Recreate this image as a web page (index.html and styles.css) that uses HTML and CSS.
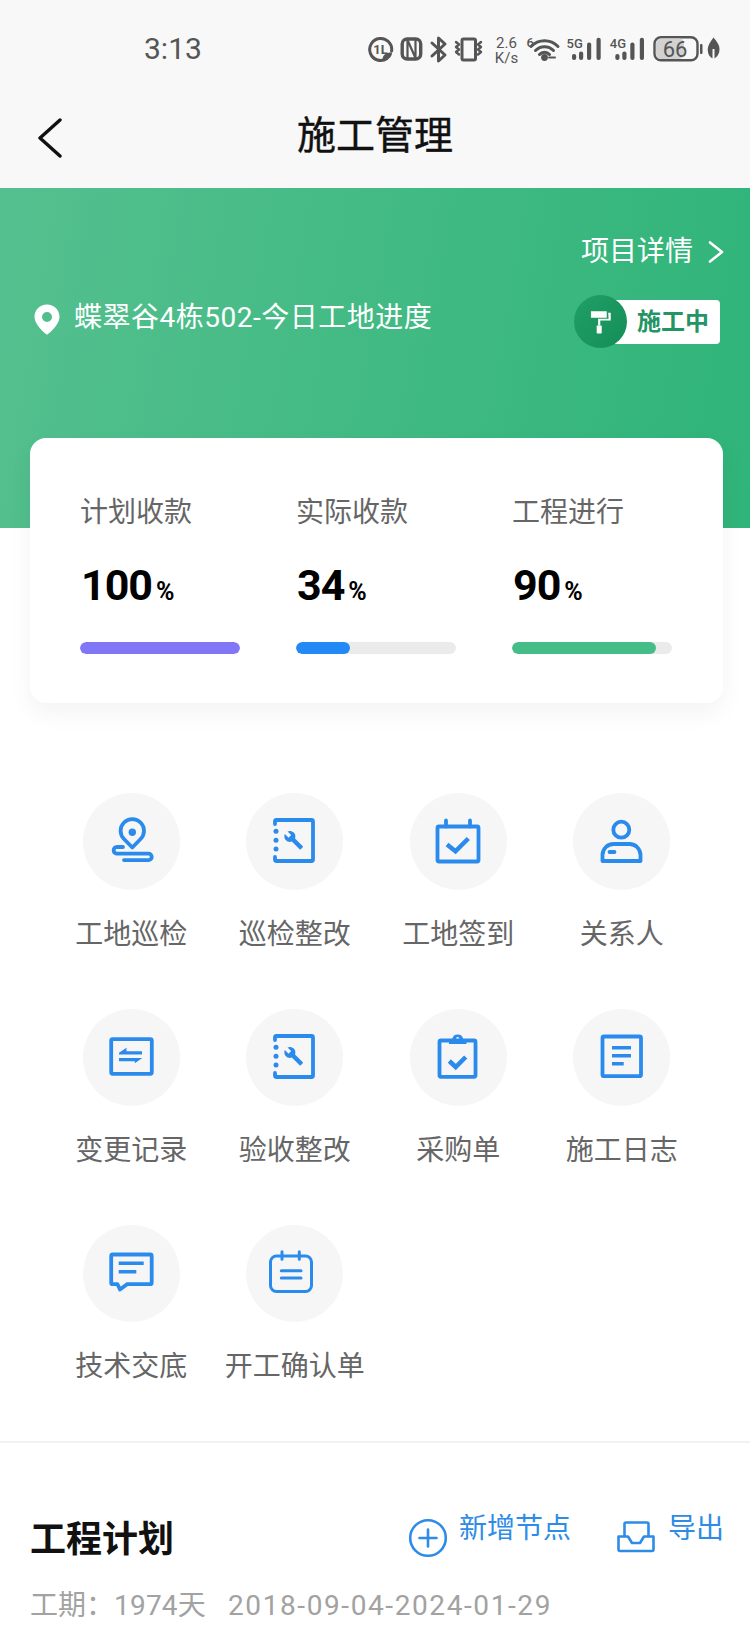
FILE: index.html
```html
<!DOCTYPE html>
<html lang="zh-CN">
<head>
<meta charset="utf-8">
<title>施工管理</title>
<link rel="stylesheet" href="styles.css">
</head>
<body>
<header class="top">
  <div class="status">
    <span class="time">3:13</span>
    <svg class="status-icons" width="356" height="36" viewBox="0 -3 356 36">
      <g class="st">
        <path d="M19 24.500A11 11 0 1 1 23.600 17"/>
        <path d="M14.500 26c0-5 3-7.500 9.500-7.500 0 5-4 7.500-9.500 7.500z" class="st-fill"/>
        <rect x="34.200" y="5" width="18.500" height="20" rx="5" stroke-width="3.400"/>
        <path d="M39.500 24V6l8 18V6" stroke-width="2.200"/>
        <path d="M64 9l13 12-6.500 6V4L77 10 64 22" stroke-width="3"/>
        <rect x="94" y="5" width="13.500" height="21" rx="1.500"/>
        <path d="M88 8l3 2.500-3 2.500 3 2.500-3 2.500 3 2.500M113 8l-3 2.500 3 2.500-3 2.500 3 2.500-3 2.500" stroke-width="2.400"/>
        <path d="M163 12.500a19 19 0 0 1 27 0M167.500 16.500a12.500 12.500 0 0 1 18 0M171.500 20.500a6.500 6.500 0 0 1 10 0" stroke-width="3"/>
        <path d="M181 23.500h6" stroke-width="2"/>
        <rect x="286.500" y="3.200" width="43" height="23" rx="6.500" stroke-width="2.400"/>
      </g>
      <rect class="st-batt" x="288" y="4.500" width="28" height="20.500" rx="5"/>
      <g class="st-solid">
        <circle cx="176.500" cy="23.500" r="3.400"/>
        <rect x="204" y="20" width="4.200" height="6" rx="2"/><rect x="211" y="17.500" width="4.200" height="8.500" rx="2"/><rect x="219" y="8.500" width="4.200" height="17.500" rx="2"/><rect x="228.500" y="3.700" width="4.200" height="22.300" rx="2"/>
        <rect x="247.300" y="20" width="4.200" height="6" rx="2"/><rect x="254.300" y="17.500" width="4.200" height="8.500" rx="2"/><rect x="262.300" y="8.500" width="4.200" height="17.500" rx="2"/><rect x="271.800" y="3.700" width="4.200" height="22.300" rx="2"/>
        <rect x="332" y="10" width="2.500" height="10" rx="1"/>
        <path d="M345.500 3.500c4 4.500 6 8 6 11.500 0 5-2.500 8-5 9.500V15l-2 0v9.500c-3-1.500-4.800-4.500-4.800-9 0-4 2.800-8 5.800-12z"/>
        <text x="12.500" y="20" class="st-t12">1L</text>
        <text x="138.500" y="13.700" class="st-t15">2.6</text>
        <text x="138.500" y="28.700" class="st-t15">K/s</text>
        <text x="158.500" y="13" class="st-t13">6</text>
        <text x="198.500" y="14.300" class="st-t13">5G</text>
        <text x="241.800" y="14.300" class="st-t13">4G</text>
        <text x="307" y="23" class="st-t22">66</text>
      </g>
    </svg>
  </div>
  <div class="nav">
    <svg class="back" width="26" height="42" viewBox="0 0 26 42"><path d="M24 3L4 21l20 18"/></svg>
    <h1 class="title">施工管理</h1>
  </div>
</header>

<section class="hero">
  <div class="detail">
    <span>项目详情</span>
    <svg width="16" height="22" viewBox="0 0 16 22"><path d="M2 1.500L14 11 2 20.500"/></svg>
  </div>
  <div class="hero-row">
    <div class="place">
      <svg width="26" height="31" viewBox="0 0 26 31"><path fill-rule="evenodd" d="M13 0.500c6.900 0 12.500 5.400 12.500 12.200 0 6.500-6.500 13.500-12.500 18-6-4.500-12.500-11.500-12.500-18C.5 5.900 6.100.5 13 .5zm0 7.500a5 5 0 1 0 0 10 5 5 0 0 0 0-10z"/></svg>
      <span>蝶翠谷4栋502-今日工地进度</span>
    </div>
    <div class="badge">
      <span class="badge-dot">
        <svg width="32" height="36" viewBox="0 0 32 36"><path d="M2 3h22v9H2zM26 5h3.500v11H15v7h-3V13.500h14.500z"/><rect x="10" y="23" width="7" height="11" rx="1"/></svg>
      </span>
      <span class="badge-text">施工中</span>
    </div>
  </div>
</section>

<section class="card">
  <div class="stat">
    <div class="stat-label">计划收款</div>
    <div class="stat-num">100<small>%</small></div>
    <div class="track"><div class="fill fill-purple" style="width:100%"></div></div>
  </div>
  <div class="stat">
    <div class="stat-label">实际收款</div>
    <div class="stat-num">34<small>%</small></div>
    <div class="track"><div class="fill fill-blue" style="width:34%"></div></div>
  </div>
  <div class="stat">
    <div class="stat-label">工程进行</div>
    <div class="stat-num">90<small>%</small></div>
    <div class="track"><div class="fill fill-green" style="width:90%"></div></div>
  </div>
</section>

<nav class="grid">
  <div class="item">
    <span class="disc"><svg class="ico" viewBox="0 0 97 97"><path d="M49.300 54.500L41 46a11.700 11.700 0 1 1 16.600 0z"/><circle class="solid" cx="49.300" cy="39.300" r="3.700"/><path d="M40 54h-6.500a3.400 3.400 0 0 0 0 6.700h32a3.200 3.200 0 0 1 0 6.400H41"/></svg></span>
    <span class="item-label">工地巡检</span>
  </div>
  <div class="item">
    <span class="disc"><svg class="ico" viewBox="0 0 97 97"><path d="M29 31v-2.500a1.500 1.500 0 0 1 1.500-1.500h35a1.500 1.500 0 0 1 1.500 1.500v38a1.500 1.500 0 0 1-1.500 1.500h-35a1.500 1.500 0 0 1-1.500-1.500V64"/><circle class="solid" cx="30" cy="38.300" r="2.500"/><circle class="solid" cx="30" cy="47.300" r="2.500"/><circle class="solid" cx="30" cy="56" r="2.500"/><path class="solid" transform="translate(37.500 37) scale(.85)" d="M22.700 19l-9.100-9.100c.9-2.300.4-5-1.500-6.900-2-2-5-2.400-7.400-1.300L9 6 6 9 1.600 4.700C.4 7.100.9 10.100 2.900 12.100c1.900 1.900 4.600 2.400 6.900 1.500l9.100 9.100c.4.4 1 .4 1.400 0l2.300-2.300c.5-.4.500-1.100.1-1.400z"/></svg></span>
    <span class="item-label">巡检整改</span>
  </div>
  <div class="item">
    <span class="disc"><svg class="ico" viewBox="0 0 97 97"><rect x="27.500" y="33.500" width="41" height="35" rx="1.500"/><path d="M36 27.500v6M60 27.500v6"/><path class="thick" d="M37 51.500l8.500 6.800L58.300 45.500"/></svg></span>
    <span class="item-label">工地签到</span>
  </div>
  <div class="item">
    <span class="disc"><svg class="ico" viewBox="0 0 97 97"><circle cx="48.300" cy="36.700" r="8"/><path d="M29.500 68v-6a11 11 0 0 1 11-11h16a11 11 0 0 1 11 11v6z"/><path d="M36.500 59h5"/></svg></span>
    <span class="item-label">关系人</span>
  </div>
  <div class="item">
    <span class="disc"><svg class="ico" viewBox="0 0 97 97"><rect x="28.200" y="30.200" width="40.600" height="34.600" rx="1.500"/><path class="solid" d="M36 43.800l7.500-5v3.400H59v3.300H36zM36 49h23.300l-7.500 5.200v-2H36z"/></svg></span>
    <span class="item-label">变更记录</span>
  </div>
  <div class="item">
    <span class="disc"><svg class="ico" viewBox="0 0 97 97"><path d="M29 31v-2.500a1.500 1.500 0 0 1 1.500-1.500h35a1.500 1.500 0 0 1 1.500 1.500v38a1.500 1.500 0 0 1-1.500 1.500h-35a1.500 1.500 0 0 1-1.500-1.500V64"/><circle class="solid" cx="30" cy="38.300" r="2.500"/><circle class="solid" cx="30" cy="47.300" r="2.500"/><circle class="solid" cx="30" cy="56" r="2.500"/><path class="solid" transform="translate(37.500 37) scale(.85)" d="M22.700 19l-9.100-9.100c.9-2.300.4-5-1.500-6.900-2-2-5-2.400-7.400-1.300L9 6 6 9 1.600 4.700C.4 7.100.9 10.100 2.900 12.100c1.900 1.900 4.600 2.400 6.900 1.500l9.100 9.100c.4.4 1 .4 1.400 0l2.300-2.300c.5-.4.500-1.100.1-1.400z"/></svg></span>
    <span class="item-label">验收整改</span>
  </div>
  <div class="item">
    <span class="disc"><svg class="ico" viewBox="0 0 97 97"><rect x="29.500" y="31.500" width="36" height="36.300" rx="1.500"/><path class="thick" d="M39.300 52l6.400 6 10-10"/><path class="solid" fill-rule="evenodd" d="M39 30h3.300a5.500 5.500 0 0 1 10.800 0H56.500v5H39zm8.700-2a1.700 1.700 0 1 0 0 3.400 1.700 1.700 0 0 0 0-3.400z"/></svg></span>
    <span class="item-label">采购单</span>
  </div>
  <div class="item">
    <span class="disc"><svg class="ico" viewBox="0 0 97 97"><rect x="29.500" y="27.500" width="38.500" height="39.700" rx="1.500"/><path class="line" d="M39 38.700h19M39 46.700h19M39 54.700h11.700"/></svg></span>
    <span class="item-label">施工日志</span>
  </div>
  <div class="item">
    <span class="disc"><svg class="ico" viewBox="0 0 97 97"><path d="M28.200 31a1.500 1.500 0 0 1 1.500-1.500h37.500a1.500 1.500 0 0 1 1.500 1.500v26.700a1.500 1.500 0 0 1-1.500 1.500H44l-7 5.300-2.500-5.300h-4.800a1.500 1.500 0 0 1-1.500-1.500z"/><path class="line" d="M35.700 38.300h25M35.700 46.700h17.600"/></svg></span>
    <span class="item-label">技术交底</span>
  </div>
  <div class="item">
    <span class="disc"><svg class="ico ico-thin" viewBox="0 0 97 97"><rect x="24.500" y="31" width="41" height="35.500" rx="6"/><path d="M36 26.700v7.500M53.300 26.700v7.500"/><path d="M35.300 45.700H55M35.300 53H55"/></svg></span>
    <span class="item-label">开工确认单</span>
  </div>
</nav>

<section class="plan">
  <div class="plan-head">
    <h2 class="plan-title">工程计划</h2>
    <div class="action action-add">
      <svg class="action-ico" width="40" height="40" viewBox="0 0 40 40"><circle cx="20" cy="20" r="17.800"/><path d="M20 11.500v17M11.500 20h17"/></svg>
      <span class="action-text">新增节点</span>
    </div>
    <div class="action action-out">
      <svg class="action-ico" width="38" height="32" viewBox="0 0 38 32"><path d="M7.500 15V3a1.500 1.500 0 0 1 1.500-1.500h21A1.500 1.500 0 0 1 31.500 3v12"/><path d="M1.500 15.500H11l4 6.500h8l4-6.500h9.500v13a1.500 1.500 0 0 1-1.500 1.500H3a1.500 1.500 0 0 1-1.500-1.500z"/></svg>
      <span class="action-text">导出</span>
    </div>
  </div>
  <p class="plan-sub"><span>工期：</span><span class="plan-days">1974天</span><span class="plan-dates">2018-09-04-2024-01-29</span></p>
</section>
</body>
</html>
```
FILE: styles.css
```css
* { box-sizing: border-box; }
html, body { margin: 0; padding: 0; }
body {
  width: 750px;
  height: 1650px;
  overflow: hidden;
  background: #fff;
  font-family: Roboto, "Noto Sans CJK SC", sans-serif;
  color: #333;
}
.top { background: #f8f8f8; height: 188px; }
.status {
  height: 96px;
  display: flex;
  align-items: center;
  padding: 2px 0 0 144px;
}
.time { font-size: 30px; color: #555; line-height: 30px; }
.status-icons { margin-left: auto; margin-right: 26px; }
.st { fill: none; stroke: #555; stroke-width: 3; stroke-linecap: round; stroke-linejoin: round; }
.st-fill { fill: #555; stroke: none; }
.st-batt { fill: #d2d2d2; }
.st-solid { fill: #555; }
.st-solid text { font-family: Roboto, sans-serif; }
.st-t12 { font-size: 13px; font-weight: 700; text-anchor: middle; }
.st-t13 { font-size: 13px; font-weight: 500; }
.st-t15 { font-size: 15px; text-anchor: middle; }
.st-t22 { font-size: 22px; text-anchor: middle; }
.nav {
  height: 80px;
  display: flex;
  align-items: center;
  position: relative;
  justify-content: center;
}
.back {
  position: absolute;
  left: 36px;
  top: 21px;
  fill: none;
  stroke: #111;
  stroke-width: 3.400;
  stroke-linecap: round;
  stroke-linejoin: round;
}
.title { margin: 0; font-size: 39px; font-weight: 400; color: #111; line-height: 80px; -webkit-text-stroke: .4px #111; }
.hero {
  height: 340px;
  background: linear-gradient(100deg, #55c08f 0%, #2fb479 100%);
  padding: 47px 26px 0 34px;
  color: #fff;
}
.detail {
  display: flex;
  justify-content: flex-end;
  align-items: center;
  gap: 15px;
  font-size: 28px;
  line-height: 34px;
  height: 34px;
}
.detail svg { fill: none; stroke: #fff; stroke-width: 2.600; stroke-linecap: round; stroke-linejoin: round; }
.hero-row { display: flex; justify-content: space-between; align-items: center; margin-top: 26px; }
.place { display: flex; align-items: center; gap: 14px; font-size: 28px; line-height: 40px; margin-top: -8px; letter-spacing: .5px; }
.place svg { fill: #fff; margin-top: 4px; }
.badge { display: flex; align-items: center; margin-right: 4px; }
.badge-dot {
  width: 53px;
  height: 53px;
  border-radius: 50%;
  background: linear-gradient(135deg, #1f9f66, #158e57);
  display: flex;
  align-items: center;
  justify-content: center;
  position: relative;
  z-index: 1;
}
.badge-dot svg { fill: #fff; transform: scale(.72); }
.badge-text {
  background: #fff;
  color: #239463;
  font-size: 24px;
  font-weight: 700;
  height: 44px;
  line-height: 44px;
  padding: 0 11px 0 22px;
  margin-left: -12px;
  border-radius: 0 4px 4px 0;
}
.card {
  position: relative;
  width: 693px;
  height: 265px;
  margin: -90px 0 0 30px;
  background: #fff;
  border-radius: 16px;
  box-shadow: 0 10px 24px rgba(0, 0, 0, .05);
  padding: 55px 50px 0;
  display: flex;
  gap: 56px;
}
.stat { width: 160px; }
.stat-label { font-size: 28px; line-height: 40px; color: #666; }
.stat-num {
  margin-top: 27px;
  font-size: 43px;
  line-height: 50px;
  font-weight: 700;
  color: #000;
  padding-left: 1px;
  letter-spacing: -1px;
}
.stat-num small { font-size: 25px; margin-left: 4px; font-weight: 700; letter-spacing: 0; }
.track { margin-top: 25px; height: 12px; background: #ebebeb; border-radius: 6px; overflow: hidden; }
.fill { height: 100%; border-radius: 6px; }
.fill-purple { background: #8177f6; }
.fill-blue { background: #2289f5; }
.fill-green { background: #45bd87; }
.grid {
  display: grid;
  grid-template-columns: repeat(4, 163.500px);
  row-gap: 54px;
  padding: 90px 0 55px 49.500px;
  border-bottom: 2px solid #f2f2f2;
  height: 740px;
  align-content: start;
}
.item { display: flex; flex-direction: column; align-items: center; }
.disc { width: 97px; height: 97px; border-radius: 50%; background: #f6f6f6; display: block; }
.ico {
  display: block;
  width: 97px;
  height: 97px;
  fill: none;
  stroke: #2b8bed;
  stroke-width: 3.800;
  stroke-linecap: round;
  stroke-linejoin: round;
}
.ico-thin { stroke-width: 3; }
.ico .solid { fill: #2b8bed; stroke: none; }
.ico .thick { stroke-width: 4.500; stroke-linecap: butt; stroke-linejoin: miter; }
.ico .line { stroke-width: 3.500; stroke-linecap: butt; }
.item-label { margin-top: 25px; font-size: 28px; line-height: 40px; color: #666; white-space: nowrap; }
.plan { padding: 0 26px 0 30px; }
.plan-head { display: flex; align-items: flex-start; height: 116px; padding-top: 67px; }
.plan-title { margin: 8px auto 0 0; font-size: 36px; line-height: 44px; font-weight: 700; color: #111; }
.action { display: flex; align-items: flex-start; }
.action-text { font-size: 28px; line-height: 38px; color: #2e8be6; white-space: nowrap; }
.action-ico { fill: none; stroke: #2e8be6; stroke-width: 2.600; stroke-linecap: round; stroke-linejoin: round; }
.action-add { gap: 11px; margin-right: 46px; }
.action-add .action-ico { margin-top: 8px; }
.action-out { gap: 13px; }
.action-out .action-ico { margin-top: 11px; }
.plan-sub { margin: 27px 0 0; font-size: 28px; line-height: 40px; color: #a2a2a2; display: flex; }
.plan-days { letter-spacing: .2px; }
.plan-dates { margin-left: 22px; letter-spacing: 1.600px; }
```
